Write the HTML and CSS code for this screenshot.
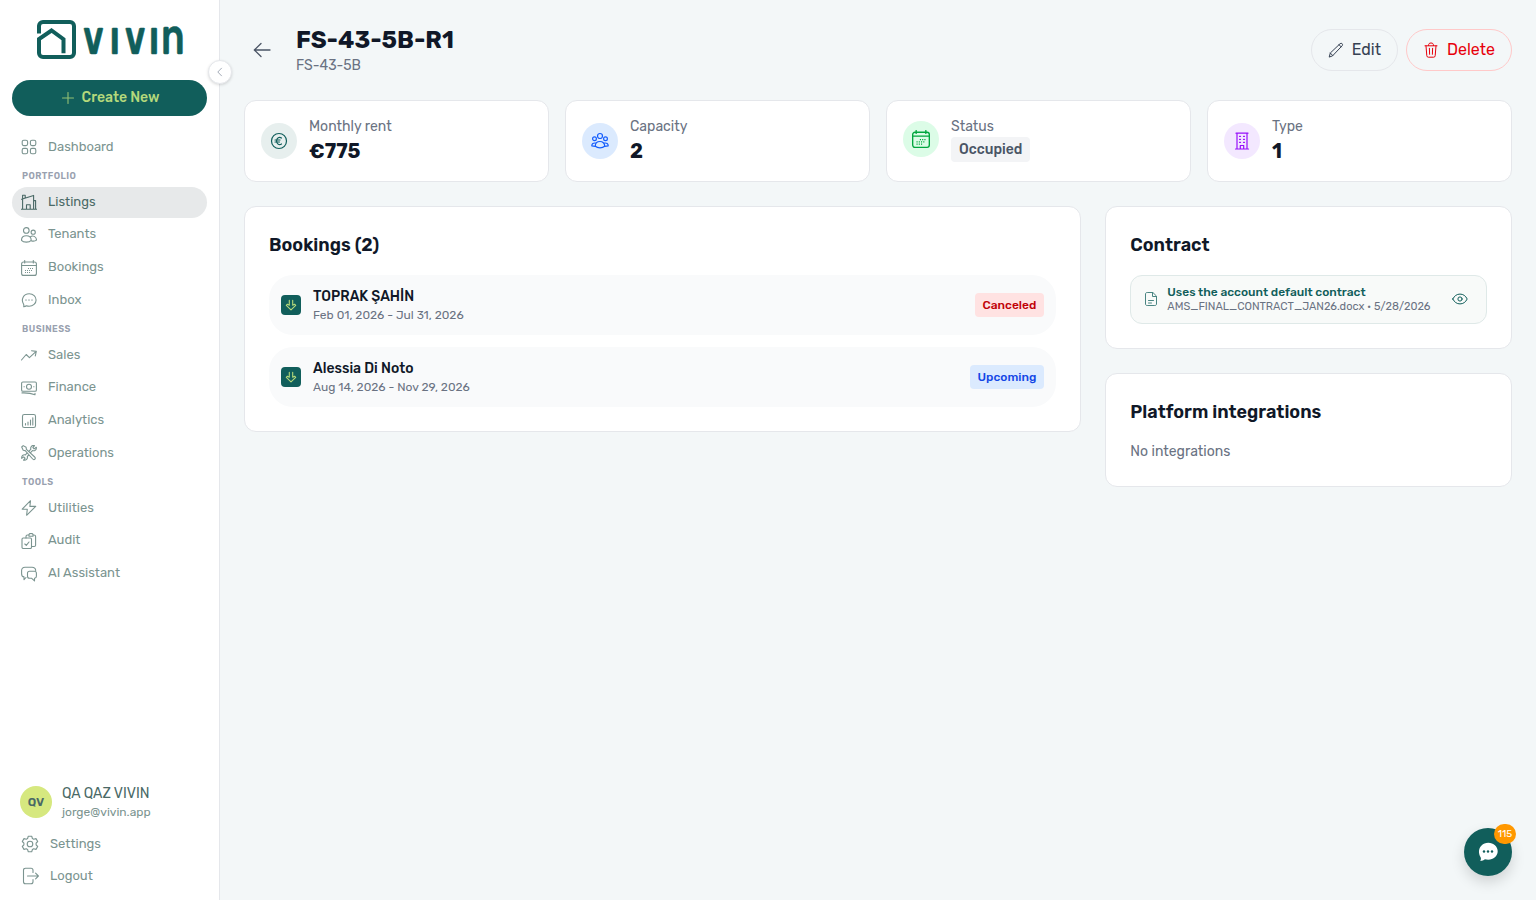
FILE: index.html
```html
<!DOCTYPE html>
<html lang="en">
<head>
    <meta charset="UTF-8">
    <meta name="viewport" content="width=device-width, initial-scale=1.0">
    <title>FS-43-5B-R1 - Vivin</title>
    <link rel="stylesheet" href="styles.css">
</head>
<body>
    <!-- Shared icons -->
    <svg class="sprite" aria-hidden="true">
        <symbol id="i-calendar" viewBox="0 0 16 16">
            <rect x=".6" y="2" width="14.800" height="13.400" rx="2"/>
            <path d="M.6 5.500h14.800M3.700.5v2.500M12.300.5v2.500"/>
            <path d="M7 8.500h5.500M4 10.500h8M4 12.500h5.500" stroke-dasharray="1 1" stroke-linecap="butt"/>
        </symbol>
        <symbol id="i-key" viewBox="0 0 12 12">
            <path d="M4.300 1.200v5L2.400 5.200 1.300 6.300 6 10.800l4.700-4.500-1.100-1.100-1.900 1V1.200"/>
        </symbol>
    </svg>

    <aside class="sidebar">
        <svg class="logo" viewBox="0 0 156 42" role="img" aria-label="Vivin">
            <path class="logo-mark" d="M3 14.500V7a4 4 0 0 1 4-4h27a4 4 0 0 1 4 4v27a4 4 0 0 1-4 4H7a4 4 0 0 1-4-4V20L15.500 11.500l12 8.700v14"/>
            <g class="logo-text">
                <text transform="scale(.77 1)" x="61.500 96 115.500 147" y="35">VIVI</text>
                <text class="logo-n" transform="scale(.76 1)" x="164.500" y="35">n</text>
            </g>
        </svg>
        <button class="collapse-btn" aria-label="Collapse">
            <svg class="icon" viewBox="0 0 10 10"><path d="M6.500 1.200 2.800 5l3.700 3.800"/></svg>
        </button>

        <button class="create-btn">
            <svg class="icon" viewBox="0 0 12 12"><path d="M6 .5v11M.5 6h11"/></svg>
            <span>Create New</span>
        </button>

        <nav class="nav">
            <a class="nav-item">
                <svg class="icon" viewBox="0 0 16 16"><rect x="1.200" y="1.200" width="5.400" height="5.400" rx="1.600"/><rect x="9.400" y="1.200" width="5.400" height="5.400" rx="1.600"/><rect x="1.200" y="9.400" width="5.400" height="5.400" rx="1.600"/><rect x="9.400" y="9.400" width="5.400" height="5.400" rx="1.600"/></svg>
                <span>Dashboard</span>
            </a>
            <div class="nav-label">Portfolio</div>
            <a class="nav-item active">
                <svg class="icon" viewBox="0 0 16 16"><path d="M.3 15.300h15.400M1.600 15V1.300h2.600v2.500M.5 5.200 12.600 1.400V15M12.600 6.600h2V15M5.500 15v-4.300h3.700V15"/></svg>
                <span>Listings</span>
            </a>
            <a class="nav-item">
                <svg class="icon" viewBox="0 0 16 16"><circle cx="5.300" cy="3.400" r="2.800"/><circle cx="12.200" cy="5.200" r="2.100"/><path d="M.5 13.300C.5 10.500 2.500 8.700 5.300 8.700s4.900 1.800 4.900 4.600c-2 2.400-7.700 2.400-9.700 0ZM9.300 10c2.400-2.300 6.200-.4 6.200 3.100-1.200 1-3.200 1.200-5 .8"/></svg>
                <span>Tenants</span>
            </a>
            <a class="nav-item">
                <svg class="icon"><use href="#i-calendar"/></svg>
                <span>Bookings</span>
            </a>
            <a class="nav-item">
                <svg class="icon" viewBox="0 0 16 16"><path d="M2.700 14.800c.2-.9.3-1.700-.1-2.600C-.4 7.400 2.500 1.700 8.200 1.700c4 0 6.900 2.800 6.900 6.300s-3.100 6.300-7 6.300c-1 0-1.900-.2-2.700-.5-.8.6-1.700.9-2.700 1Z"/><path d="M4.700 8h.6M7.700 8h.6M10.700 8h.6"/></svg>
                <span>Inbox</span>
            </a>
            <div class="nav-label">Business</div>
            <a class="nav-item">
                <svg class="icon" viewBox="0 0 16 16"><path d="m.5 13 4.700-5.500 3.200 3.100 6.500-6M10.500 3.800l4.800.6-1 4.500"/></svg>
                <span>Sales</span>
            </a>
            <a class="nav-item">
                <svg class="icon" viewBox="0 0 16 16"><rect x=".6" y="2" width="14.800" height="9.300" rx="1.300"/><circle cx="8" cy="6.700" r="2.500"/><path d="M3 6.700h.3M12.700 6.700h.3M1 12.900c5-.2 9 .2 13 1.800v-1.500"/></svg>
                <span>Finance</span>
            </a>
            <a class="nav-item">
                <svg class="icon" viewBox="0 0 16 16"><rect x="1.500" y="1.500" width="13" height="13" rx="1.800"/><path d="M4.500 12v-1.500M7 12V9M9.500 12V7M11.800 12V4.700"/></svg>
                <span>Analytics</span>
            </a>
            <a class="nav-item">
                <svg class="icon" viewBox="0 0 16 16"><path d="M.7 2 2.200.6l2.900 1.700.3 2L13.700 12c1.600 1.400-.5 3.700-2 2L4.200 5.600l-2-.4ZM10 7.200l1.500-1.600c2.200.8 4.300-1 3.800-3.400l-2.200 1.700-1.200-1.200L13.500.6C11-.1 9.100 2 9.900 4.200L8.300 5.900M6 8.200l-1.600 1.700C2.200 9.300.3 11 .7 13.400l2-1.500 1.400 1.300-1.500 2c2.400.5 4.400-1.400 3.700-3.700l1.600-1.600"/></svg>
                <span>Operations</span>
            </a>
            <div class="nav-label">Tools</div>
            <a class="nav-item">
                <svg class="icon" viewBox="0 0 16 16"><path d="M9.500.7 1.200 9.200h5.100l-.7 6.100 9.100-8.900H8.900Z"/></svg>
                <span>Utilities</span>
            </a>
            <a class="nav-item">
                <svg class="icon" viewBox="0 0 16 16"><rect x="1" y="5" width="9.500" height="10.500" rx="1.200"/><path d="M5 5V3.500C5 2.500 5.500 2 6.500 2H8M12 2h1c1 0 1.600.5 1.600 1.500v8.800c0 .8-.6 1.200-1.400 1.200h-2.700M8 1.300c1-1.200 3-1.200 4 0v1.900H8ZM3.800 11l1.500 1.400L8 9"/></svg>
                <span>Audit</span>
            </a>
            <a class="nav-item">
                <svg class="icon" viewBox="0 0 16 16"><path d="M5 11.500 3 13.700v-2.800C1.200 10.700.6 9.600.6 7.700V4.400C.6 2.300 2 1.300 4 1.300h7c2.200 0 3.500 1 3.700 3.100M8.500 5.200h5c1.300 0 1.900.8 1.900 2v3.100c0 1.200-.7 1.900-1.900 2v2.600l-2.800-2.600H8.500c-1.300 0-2-.8-2-2V7.200c0-1.200.7-2 2-2Z"/></svg>
                <span>AI Assistant</span>
            </a>
        </nav>

        <div class="account">
            <div class="user">
                <div class="avatar">QV</div>
                <div>
                    <div class="user-name">QA QAZ VIVIN</div>
                    <div class="user-email">jorge@vivin.app</div>
                </div>
            </div>
            <a class="account-link">
                <svg class="icon" viewBox="0 0 18 18"><circle cx="9" cy="9" r="2.800"/><path d="M7.300 1.200h3.400l.7 2.300 1.300.7 2.300-.6 1.700 2.900-1.600 1.700v1.600l1.600 1.700-1.700 2.900-2.300-.6-1.300.7-.7 2.300H7.300l-.7-2.300-1.300-.7-2.300.6-1.700-2.900 1.600-1.700V8.200L1.300 6.500 3 3.600l2.300.6 1.300-.7Z"/></svg>
                <span>Settings</span>
            </a>
            <a class="account-link">
                <svg class="icon" viewBox="0 0 18 18"><path d="M12 5.500V3.200c0-1.200-.7-2-2-2H4.500c-1.300 0-2 .8-2 2v11.600c0 1.200.7 2 2 2H10c1.300 0 2-.8 2-2v-2.300M6.500 9h10.900M14.600 6.200 17.400 9l-2.800 2.800"/></svg>
                <span>Logout</span>
            </a>
        </div>
    </aside>

    <main class="main">
        <header class="page-header">
            <button class="back-btn" aria-label="Back">
                <svg class="icon" viewBox="0 0 18 18"><path d="M17 9H1.300M8 2.500 1.300 9 8 15.500"/></svg>
            </button>
            <div class="page-title">
                <h1>FS-43-5B-R1</h1>
                <p>FS-43-5B</p>
            </div>
            <div class="actions">
                <button class="btn">
                    <svg class="icon" viewBox="0 0 16 16"><path d="m1.300 14.700 1-3.700 9.800-9.300c1.400-1.200 3.300.6 2.100 2L4.800 13.600ZM11 2.700l2.200 2.200M2.300 11l2.500 2.600"/></svg>
                    <span>Edit</span>
                </button>
                <button class="btn btn-danger">
                    <svg class="icon" viewBox="0 0 16 16"><path d="M2 3.800h12M3 3.800l.8 9.900c.1 1 .6 1.500 1.500 1.500h5.400c.9 0 1.400-.5 1.500-1.500l.8-9.900M5.500 3.500C5.500 1.700 6.300 1 8 1s2.500.7 2.500 2.500M6.400 6.300l.2 6M9.600 6.300l-.2 6"/></svg>
                    <span>Delete</span>
                </button>
            </div>
        </header>

        <section class="stats">
            <div class="card stat">
                <div class="stat-icon teal">
                    <svg class="icon" viewBox="0 0 18 18"><circle cx="9" cy="9" r="7.500"/><path d="M11.500 6C9.300 4.500 6.600 5.700 6.600 9s2.700 4.500 4.900 3M5 8h5M5 10h4.500"/></svg>
                </div>
                <div>
                    <div class="stat-label">Monthly rent</div>
                    <div class="stat-value">€775</div>
                </div>
            </div>
            <div class="card stat">
                <div class="stat-icon blue">
                    <svg class="icon" viewBox="0 0 18 18"><circle cx="9" cy="4" r="2.500"/><circle cx="3.500" cy="6.800" r="1.900"/><circle cx="14.500" cy="6.800" r="1.900"/><path d="M4.300 14.300c0-3.200 2-4.800 4.700-4.800s4.700 1.600 4.700 4.800c-2.300 2.100-7.100 2.100-9.400 0ZM4.300 14.300l-3.500-.5c0-1.900 1.200-3.200 4.300-2.700M13.700 14.300l3.500-.5c0-1.900-1.200-3.200-4.300-2.700"/></svg>
                </div>
                <div>
                    <div class="stat-label">Capacity</div>
                    <div class="stat-value">2</div>
                </div>
            </div>
            <div class="card stat">
                <div class="stat-icon green">
                    <svg class="icon"><use href="#i-calendar"/></svg>
                </div>
                <div>
                    <div class="stat-label">Status</div>
                    <span class="tag">Occupied</span>
                </div>
            </div>
            <div class="card stat">
                <div class="stat-icon purple">
                    <svg class="icon" viewBox="0 0 18 18"><path d="M2.500 17h13M3 1.200h12M4 1.200V17M14 1.200V17M7.300 17v-3.500h3.400V17"/><path d="M6.500 4.300h1M10.500 4.300h1M6.500 7.300h1M10.500 7.300h1M6.500 10.300h1M10.500 10.300h1"/></svg>
                </div>
                <div>
                    <div class="stat-label">Type</div>
                    <div class="stat-value">1</div>
                </div>
            </div>
        </section>

        <div class="columns">
            <section class="card panel">
                <h2>Bookings (2)</h2>
                <div class="bookings">
                    <div class="booking">
                        <span class="booking-icon"><svg class="icon"><use href="#i-key"/></svg></span>
                        <div>
                            <div class="booking-name">TOPRAK ŞAHİN</div>
                            <div class="booking-dates">Feb 01, 2026 - Jul 31, 2026</div>
                        </div>
                        <span class="badge canceled">Canceled</span>
                    </div>
                    <div class="booking">
                        <span class="booking-icon"><svg class="icon"><use href="#i-key"/></svg></span>
                        <div>
                            <div class="booking-name">Alessia Di Noto</div>
                            <div class="booking-dates">Aug 14, 2026 - Nov 29, 2026</div>
                        </div>
                        <span class="badge upcoming">Upcoming</span>
                    </div>
                </div>
            </section>

            <div class="side-column">
                <section class="card panel">
                    <h2>Contract</h2>
                    <div class="contract">
                        <svg class="icon doc-icon" viewBox="0 0 14 16"><path d="M8.500 1.500H3.200c-1 0-1.700.5-1.700 1.500v10c0 1 .7 1.500 1.700 1.500h7.600c1 0 1.700-.5 1.700-1.500V5.500ZM8.500 1.500v4h4M4.500 9.500h5M4.500 12h3"/></svg>
                        <div>
                            <div class="contract-title">Uses the account default contract</div>
                            <div class="contract-file">AMS_FINAL_CONTRACT_JAN26.docx • 5/28/2026</div>
                        </div>
                        <svg class="icon eye-icon" viewBox="0 0 16 16"><path d="M.8 8c1.600-3.200 4-4.900 7.200-4.900s5.600 1.700 7.200 4.900c-1.600 3.200-4 4.900-7.200 4.900S2.400 11.200.8 8Z"/><circle cx="8" cy="8" r="2.100"/></svg>
                    </div>
                </section>
                <section class="card panel">
                    <h2>Platform integrations</h2>
                    <p class="empty">No integrations</p>
                </section>
            </div>
        </div>
    </main>

    <button class="chat-btn" aria-label="Chat">
        <svg viewBox="0 0 20 20"><path class="bubble" d="M2.300 19c.7-1.300.8-2.400.3-3.700C-1.600 8.400 2.800.7 10.300.7c5.300 0 9.400 3.800 9.400 8.600s-4.200 8.500-9.500 8.500c-1.200 0-2.300-.2-3.300-.5-1.300 1.100-2.800 1.700-4.600 1.700Z"/><circle cx="6" cy="9.500" r="1.200"/><circle cx="10" cy="9.500" r="1.200"/><circle cx="14" cy="9.500" r="1.200"/></svg>
        <span class="chat-count">115</span>
    </button>
</body>
</html>
```
FILE: styles.css
```css
* {
    margin: 0;
    padding: 0;
    box-sizing: border-box;
}

body {
    font-family: 'Rubik', Roboto, sans-serif;
    background: #f3f7f8;
    color: #101828;
    height: 100vh;
    display: flex;
    overflow: hidden;
}

button {
    font: inherit;
    background: none;
    border: none;
    cursor: pointer;
}

.sprite {
    position: absolute;
    width: 0;
    height: 0;
}

.icon {
    width: 16px;
    height: 16px;
    flex-shrink: 0;
    fill: none;
    stroke: currentColor;
    stroke-width: 1.1;
    stroke-linecap: round;
    stroke-linejoin: round;
}

/* Sidebar */
.sidebar {
    position: relative;
    width: 220px;
    flex-shrink: 0;
    height: 100vh;
    padding: 19px 12px 8px;
    background: #fff;
    border-right: 1px solid #e5e7eb;
    display: flex;
    flex-direction: column;
}

.logo {
    width: 156px;
    height: 42px;
    margin-left: 24px;
    flex-shrink: 0;
    overflow: visible;
}

.logo-mark {
    fill: none;
    stroke: #115e5b;
    stroke-width: 4;
}

.logo-text {
    fill: #115e5b;
    stroke: #115e5b;
    stroke-width: 0.5;
    font-size: 38px;
    font-weight: 700;
}

.logo-n {
    font-size: 50px;
    font-weight: 500;
}

.collapse-btn {
    position: absolute;
    top: 60px;
    right: -13px;
    width: 24px;
    height: 24px;
    border-radius: 50%;
    background: #fff;
    border: 1px solid #e5e7eb;
    box-shadow: 0 1px 3px rgba(0, 0, 0, 0.15);
    color: #99a1af;
    display: flex;
    align-items: center;
    justify-content: center;
}

.collapse-btn .icon {
    width: 10px;
    height: 10px;
    stroke-width: 0.9;
}

.create-btn {
    height: 36px;
    flex-shrink: 0;
    margin-top: 19px;
    padding-left: 2px;
    border-radius: 18px;
    background: #115e5b;
    color: #b5d97b;
    font-size: 14px;
    line-height: 20px;
    font-weight: 500;
    display: flex;
    align-items: center;
    justify-content: center;
    gap: 8px;
}

.create-btn span {
    margin-top: -1px;
}

.create-btn .icon {
    width: 12px;
    height: 12px;
    opacity: 0.8;
}

.nav {
    margin-top: 16px;
    display: flex;
    flex-direction: column;
    gap: 2px;
}

.nav-item {
    height: 30.67px;
    padding: 0 9px;
    border-radius: 16px;
    display: flex;
    align-items: center;
    gap: 11px;
    color: #7b9490;
    font-size: 13px;
    line-height: 18px;
}

.nav-item span,
.account-link span {
    margin-top: -1px;
}

.nav-item.active {
    background: #e7e9ea;
    color: #4a6966;
}

.nav-label {
    height: 20.33px;
    padding: 2.5px 10px 0;
    line-height: 18px;
    font-size: 9px;
    font-weight: 600;
    letter-spacing: 0.45px;
    text-transform: uppercase;
    color: #99a1af;
}

.account {
    margin-top: auto;
}

.user {
    display: flex;
    align-items: center;
    gap: 10px;
    padding: 0 8px;
    height: 40px;
    margin-bottom: 6px;
}

.avatar {
    width: 32px;
    height: 32px;
    border-radius: 50%;
    background: #d6e87f;
    color: #4a6966;
    font-size: 12px;
    font-weight: 600;
    display: flex;
    align-items: center;
    justify-content: center;
}

.user-name {
    font-size: 14px;
    line-height: 20px;
    color: #4a6966;
}

.user-email {
    font-size: 12px;
    line-height: 16px;
    color: #7b9490;
}

.account-link {
    height: 32px;
    padding: 0 9px;
    display: flex;
    align-items: center;
    gap: 11px;
    color: #7b9490;
    font-size: 13px;
    line-height: 18px;
}

.account-link .icon {
    width: 18px;
    height: 18px;
}

/* Page */
.main {
    flex: 1;
    padding: 24px;
}

.page-header {
    display: flex;
    align-items: center;
    height: 52px;
    margin-bottom: 24px;
}

.back-btn {
    width: 36px;
    height: 36px;
    margin-right: 16px;
    display: flex;
    align-items: center;
    justify-content: center;
    color: #4a5565;
}

.back-btn .icon {
    width: 18px;
    height: 18px;
    stroke-width: 1.3;
}

.page-title h1 {
    font-size: 24px;
    line-height: 32px;
    font-weight: 700;
}

.page-title p {
    font-size: 14px;
    line-height: 20px;
    color: #6a7282;
}

.actions {
    margin-left: auto;
    display: flex;
    gap: 8px;
}

.btn {
    height: 42px;
    padding: 0 16px;
    border: 1px solid #e5e7eb;
    border-radius: 21px;
    color: #364153;
    font-size: 16px;
    line-height: 24px;
    display: flex;
    align-items: center;
    gap: 8px;
}

.btn .icon {
    stroke-width: 1;
}

.btn span {
    margin-top: -1px;
}

.btn-danger {
    color: #e7000b;
    border-color: #ffc9c9;
}

.card {
    background: #fff;
    border: 1px solid #e5e7eb;
    border-radius: 12px;
}

.stats {
    display: grid;
    grid-template-columns: repeat(4, 1fr);
    gap: 16px;
    margin-bottom: 24px;
}

.stat {
    height: 82px;
    padding: 16px;
    display: flex;
    align-items: flex-start;
    gap: 12px;
}

.stat-icon {
    width: 36px;
    height: 36px;
    margin-top: 6px;
    border-radius: 50%;
    display: flex;
    align-items: center;
    justify-content: center;
}

.stat-icon .icon {
    width: 18px;
    height: 18px;
    stroke-width: 1.2;
}

.teal {
    background: #e7efee;
    color: #115e5b;
}

.blue {
    background: #dbeafe;
    color: #155dfc;
}

.green {
    background: #dcfce7;
    color: #00a63e;
    margin-top: 4px;
}

.purple {
    background: #f3e8ff;
    color: #9810fa;
}

.stat-label {
    font-size: 14px;
    line-height: 20px;
    color: #6a7282;
}

.stat-value {
    font-size: 20px;
    line-height: 28px;
    font-weight: 700;
}

.tag {
    display: block;
    height: 25px;
    padding: 0 8px;
    border-radius: 4px;
    background: #f3f4f6;
    color: #4a5565;
    font-size: 14px;
    line-height: 25px;
    font-weight: 500;
}

.columns {
    display: grid;
    grid-template-columns: repeat(3, 1fr);
    gap: 24px;
    align-items: start;
}

.columns > .panel {
    grid-column: span 2;
}

.side-column {
    display: flex;
    flex-direction: column;
    gap: 24px;
}

.panel {
    padding: 24px;
}

.panel h2 {
    font-size: 18px;
    line-height: 28px;
    font-weight: 600;
    margin-bottom: 16px;
}

.bookings {
    display: flex;
    flex-direction: column;
    gap: 12px;
}

.booking {
    display: flex;
    align-items: center;
    gap: 12px;
    padding: 12px;
    border-radius: 24px;
    background: #f9fafb;
}

.booking-icon {
    width: 20px;
    height: 20px;
    border-radius: 4px;
    background: #115e5b;
    color: #b5d97b;
    display: flex;
    align-items: center;
    justify-content: center;
}

.booking-icon .icon {
    width: 12px;
    height: 12px;
}

.booking-name {
    font-size: 14px;
    line-height: 20px;
    font-weight: 500;
}

.booking-dates {
    font-size: 12px;
    line-height: 16px;
    color: #6a7282;
}

.badge {
    margin-left: auto;
    height: 24px;
    padding: 0 8px;
    border-radius: 4px;
    font-size: 12px;
    line-height: 24px;
    font-weight: 500;
}

.canceled {
    background: #ffe2e2;
    color: #c10007;
}

.upcoming {
    background: #dbeafe;
    color: #1447e6;
}

.contract {
    height: 49px;
    padding: 0 18px 0 13px;
    border: 1px solid #dfe9e8;
    border-radius: 12px;
    background: #f8faf9;
    color: #115e5b;
    display: flex;
    align-items: center;
    gap: 9px;
}

.contract .icon {
    margin-bottom: 1px;
    stroke-width: 1;
}

.doc-icon {
    width: 14px;
    opacity: 0.75;
}

.eye-icon {
    margin-left: auto;
}

.contract-title {
    font-size: 12px;
    line-height: 15px;
    font-weight: 500;
}

.contract-file {
    font-size: 11px;
    line-height: 14px;
    letter-spacing: -0.02px;
    color: #6a7282;
    white-space: nowrap;
}

.empty {
    font-size: 14px;
    line-height: 20px;
    color: #6a7282;
}

/* Chat widget */
.chat-btn {
    position: fixed;
    right: 24px;
    bottom: 24px;
    width: 48px;
    height: 48px;
    border-radius: 50%;
    background: #115e5b;
    box-shadow: 0 6px 14px rgba(0, 0, 0, 0.15);
    display: flex;
    align-items: center;
    justify-content: center;
}

.chat-btn svg {
    width: 20px;
    height: 20px;
    fill: #115e5b;
}

.chat-btn .bubble {
    fill: #fff;
}

.chat-count {
    position: absolute;
    top: -4px;
    right: -4px;
    height: 20px;
    min-width: 22px;
    border-radius: 10px;
    background: #ff9800;
    color: #fff;
    font-size: 10px;
    line-height: 20px;
    text-align: center;
}
```
